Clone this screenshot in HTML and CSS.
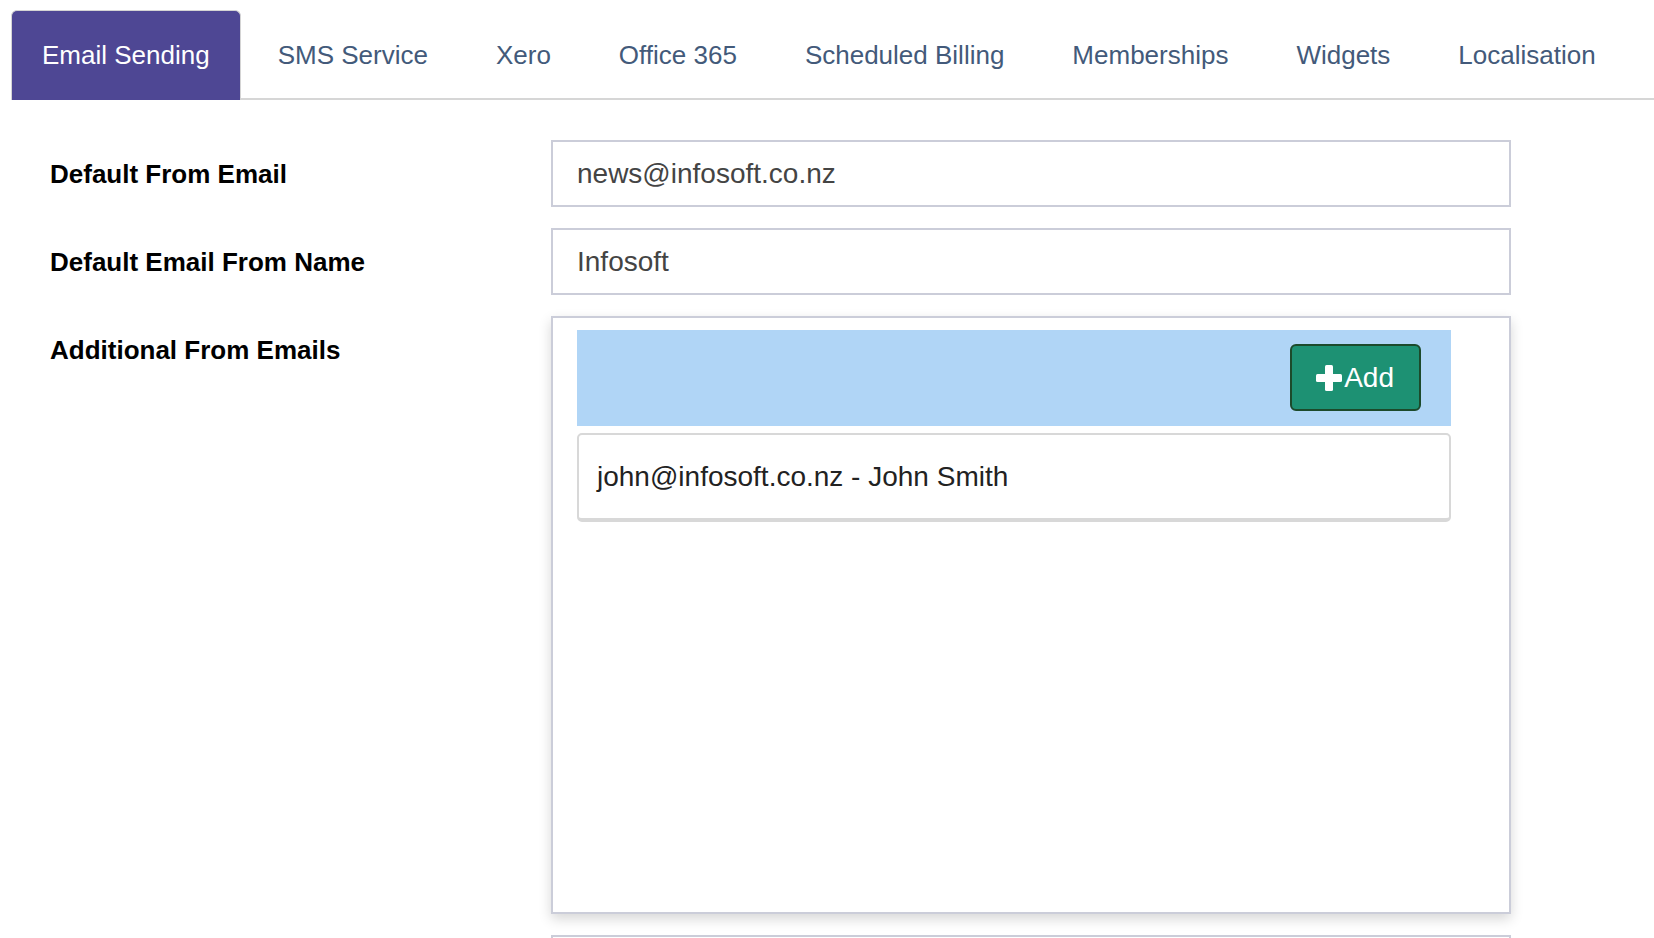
FILE: index.html
```html
<!DOCTYPE html>
<html lang="en">
<head>
    <meta charset="UTF-8">
    <meta name="viewport" content="width=device-width, initial-scale=1.0">
    <title>Settings - Email Sending</title>
    <link rel="stylesheet" href="styles.css">
</head>
<body>
    <ul class="tabs">
        <li class="tab active">Email Sending</li>
        <li class="tab">SMS Service</li>
        <li class="tab">Xero</li>
        <li class="tab">Office 365</li>
        <li class="tab">Scheduled Billing</li>
        <li class="tab">Memberships</li>
        <li class="tab">Widgets</li>
        <li class="tab">Localisation</li>
    </ul>

    <div class="form">
        <label class="label" for="fromEmail">Default From Email</label>
        <input class="field" id="fromEmail" type="text" value="news@infosoft.co.nz">

        <label class="label" for="fromName">Default Email From Name</label>
        <input class="field" id="fromName" type="text" value="Infosoft">

        <div class="label">Additional From Emails</div>
        <div class="list-box">
            <div class="list-bar">
                <button class="add-btn">
                    <svg class="plus" width="26" height="26" viewBox="0 0 26 26">
                        <rect x="9" y="0" width="8" height="26" rx="1.5" fill="#fff"/>
                        <rect x="0" y="9" width="26" height="8" rx="1.5" fill="#fff"/>
                    </svg>Add
                </button>
            </div>
            <div class="list-item">john@infosoft.co.nz - John Smith</div>
        </div>

        <div class="label"></div>
        <input class="field" type="text" value="">
    </div>
</body>
</html>
```

FILE: styles.css
```css
body {
    margin: 0;
    font-family: "Liberation Sans", Arial, Helvetica, sans-serif;
    background: #fff;
    overflow: hidden;
}
.tabs {
    display: flex;
    gap: 6px;
    list-style: none;
    margin: 10px 0 0 11px;
    padding: 0;
    border-bottom: 2px solid #d6d6d6;
}
.tab {
    margin-bottom: -2px;
    padding: 29px 30px 30px;
    border: 1px solid transparent;
    border-bottom: 0;
    border-radius: 6px 6px 0 0;
    font-size: 26px;
    line-height: 30px;
    color: #435a7a;
    white-space: nowrap;
}
.tab.active {
    background: #4e4794;
    border-color: #d4d4d4;
    color: #fff;
}
.form {
    display: grid;
    grid-template-columns: 501px 960px;
    row-gap: 21px;
    margin-top: 40px;
    padding-left: 50px;
}
.label {
    padding-top: 19px;
    font-size: 26px;
    line-height: 30px;
    font-weight: bold;
    color: #000;
}
.field {
    display: block;
    width: 100%;
    height: 67px;
    box-sizing: border-box;
    margin: 0;
    padding: 0 24px;
    border: 2px solid #cbcdd9;
    border-radius: 0;
    font-family: inherit;
    font-size: 28px;
    color: #444;
    outline: none;
}
.list-box {
    height: 598px;
    box-sizing: border-box;
    padding: 12px 58px 0 24px;
    border: 2px solid #cbcdd9;
    box-shadow: 0 5px 12px rgba(0, 0, 0, 0.16);
}
.list-bar {
    display: flex;
    justify-content: flex-end;
    padding: 14px 30px 15px;
    background: #b0d5f6;
}
.add-btn {
    display: flex;
    align-items: center;
    gap: 2px;
    height: 67px;
    box-sizing: border-box;
    padding: 0 25px 0 24px;
    background: #1d9173;
    border: 2px solid #1c4a2b;
    border-radius: 6px;
    font-family: inherit;
    font-size: 28px;
    color: #fff;
    cursor: pointer;
}
.plus {
    display: block;
}
.list-item {
    display: flex;
    align-items: center;
    height: 89px;
    box-sizing: border-box;
    margin-top: 7px;
    padding-left: 18px;
    border: 2px solid #d8d8d8;
    border-bottom-width: 4px;
    border-radius: 5px;
    font-size: 28px;
    color: #222;
}
```
